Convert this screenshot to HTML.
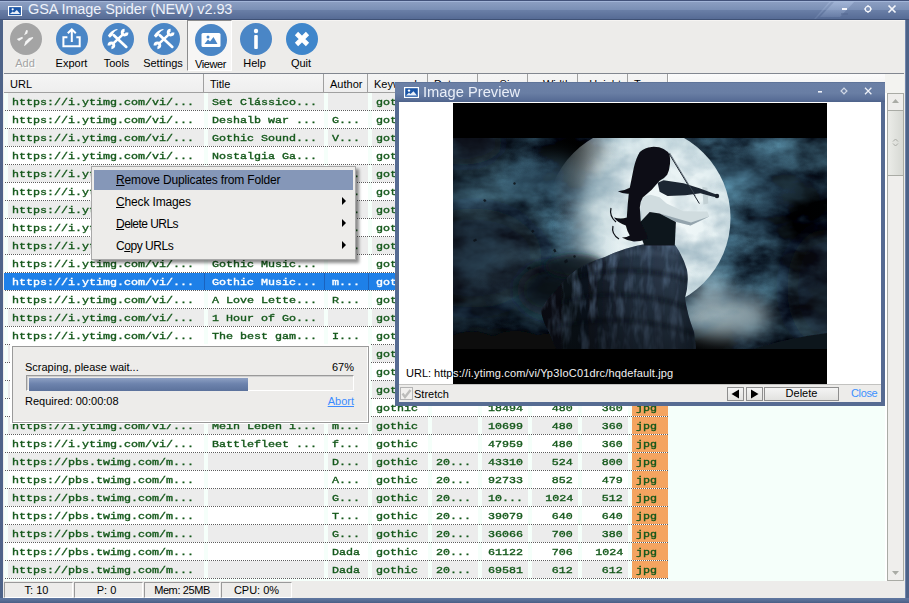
<!DOCTYPE html>
<html lang="en"><head><meta charset="utf-8"><title>GSA Image Spider (NEW) v2.93</title>
<style>
*{box-sizing:border-box;margin:0;padding:0}
html,body{width:909px;height:603px;overflow:hidden}
body{position:relative;background:#4e6388;font-family:"Liberation Sans",sans-serif;font-size:11px;color:#000}
.abs{position:absolute}
#titlebar{left:0;top:0;width:909px;height:20px;background:linear-gradient(#42527a 0,#42527a 1px,#a2b5d8 1px,#a2b5d8 2px,#8b9ec1 2px,#7a8fb5 10px,#6a7fa7 10px,#566b95 19px,#3f5175 19px,#3f5175 20px)}
#title{left:28px;top:0;height:20px;line-height:19px;font-size:14.5px;color:#eef2fa;white-space:nowrap;letter-spacing:-0.1px}
#client{left:3px;top:20px;width:902px;height:578px;background:#edecea;border-top:1px solid #f6f4f2}
#rb{left:905px;top:20px;width:1px;height:578px;background:#7086ad}
#bb{left:0;top:598px;width:909px;height:5px;background:linear-gradient(#6078a0 0,#5a7098 2px,#4a5f85 5px)}
.tbl{position:absolute;top:62px;transform:translateX(-50%);font-size:11px;white-space:nowrap;line-height:12px;top:57px}
.ico{position:absolute;top:23px;width:32px;height:32px}
#lv{left:4px;top:73px;width:900px;height:508px;background:#f5fffa;border-top:1px solid #828790}
#hdr{left:4px;top:74px;width:900px;height:19px;background:linear-gradient(#fbfbfb,#efefef);border-bottom:1px solid #a0a0a0}
.hc{position:absolute;top:74px;height:18px;border-right:1px solid #a0a0a0;box-shadow:1px 0 0 #fff;background:linear-gradient(#f5f5f5,#eeeeee);font-size:11px;line-height:20px;padding-left:6px;white-space:nowrap;overflow:hidden}
.row{position:absolute;left:4px;width:883px;height:18px}
.row .dot{position:absolute;left:0;top:17px;width:664px;height:1px;background:repeating-linear-gradient(90deg,#fff 0,#fff 1px,#5c5c5c 1px,#5c5c5c 2px)}
.c{position:absolute;top:0;height:17px;font-family:"Liberation Mono",monospace;font-weight:normal;-webkit-text-stroke:0.35px #14581a;font-size:9.3px;line-height:20px;color:#14581a;white-space:pre;overflow:hidden}
.c span{display:inline-block;transform:scaleX(1.2545);transform-origin:0 50%}
.r span{transform-origin:100% 50%}
.g .c{background:#ececec}
.w .c{background:#fff}
.row .c.t{background:#f4a460}
.sel{background:linear-gradient(#1e80e8 17px,transparent 17px)}
.vs{position:absolute;top:0;width:1px;height:17px;background:#1a62bd}
.sel .c{background:transparent;color:#fff;-webkit-text-stroke-color:#fff}
.sel .c.t{background:#f4a460;color:#14581a;-webkit-text-stroke-color:#14581a}
.r{text-align:right;padding-right:5px}
.l{padding-left:4px}
#menu{left:91px;top:166px;width:265px;height:94px;background:#edecea;border:1px solid #a8a8a8;box-shadow:3px 3px 3px rgba(0,0,0,.45)}
.mi{position:absolute;left:2px;width:259px;height:20px;line-height:21px;padding-left:22px;font-size:12px;letter-spacing:-0.15px;white-space:nowrap}
.mi u{text-decoration:underline;text-underline-offset:1px}
.mi.hl{background:#8597b8}
.arr{position:absolute;left:250px;width:0;height:0;border-left:4px solid #000;border-top:4px solid transparent;border-bottom:4px solid transparent}
#prog{left:10px;top:344px;width:360px;height:80px;background:#fff}
#progin{left:12px;top:346px;width:357px;height:77px;background:#edecea;border-left:1px solid #9a9a9a;border-top:1px solid #9a9a9a;border-right:1px solid #9a9a9a;border-bottom:1px solid #9a9a9a;box-shadow:inset -1px -1px 0 #fff}
.pt{position:absolute;font-size:11px;line-height:13px;white-space:nowrap}
#pbar{left:26px;top:375px;width:328px;height:16px;background:#edecea;border-top:1px solid #9a9a9a;border-left:1px solid #9a9a9a;border-right:1px solid #fff;border-bottom:1px solid #fff;box-shadow:inset 1px 1px 0 #d0d0d0}
#pfill{left:29px;top:378px;width:219px;height:13px;background:linear-gradient(#8da0c3,#6d83ad 45%,#5c729c)}
.sp{position:absolute;top:582px;height:16px;border-left:1px solid #9a9a9a;border-top:1px solid #9a9a9a;border-right:1px solid #fff;border-bottom:1px solid #fff;font-size:11px;line-height:15px;text-align:center;white-space:nowrap}
#sb{left:887px;top:93px;width:17px;height:488px;background:#efeeec;border:1px solid #a9aba5}
.sbb{position:absolute;left:887px;width:17px;background:#eeedeb;border:1px solid #a9aba5}
#pv{left:395px;top:82px;width:490px;height:324px;background:#566b92}
#pvt{left:395px;top:82px;width:490px;height:20px;background:linear-gradient(#5f7499 0,#5f7499 1px,#6b80a6 1px,#697ea4 11px,#586d96 18px,#4f648c 19px,#4f648c 20px)}
#pvtitle{left:423px;top:82px;height:20px;line-height:20px;font-size:15.4px;color:#e9eef8;white-space:nowrap;transform:scaleX(.955);transform-origin:0 50%}
#pvc{left:399px;top:102px;width:482px;height:300px;background:#fff}
#pvimg{left:453px;top:103px;width:374px;height:281px;background:#000}
#pvbar{left:399px;top:384px;width:482px;height:18px;background:#edecea;border-top:1px solid #c2c2c0}
.btn{position:absolute;top:387px;height:14px;border:1px solid #8e8e8e;background:linear-gradient(#f4f4f4,#e2e2e0);font-size:11px;line-height:11px;text-align:center}
</style></head>
<body>
<div class="abs" id="titlebar"></div>
<svg class="abs" style="left:800px;top:0" width="109" height="20" viewBox="800 0 109 20">
<defs><linearGradient id="hlg" x1="0" x2="0" y1="0" y2="1"><stop offset="0" stop-color="#a6b9da" stop-opacity=".85"/><stop offset="1" stop-color="#8fa3c8" stop-opacity=".25"/></linearGradient></defs><polygon points="830,1 832,1 816,19 814,19" fill="url(#hlg)" opacity=".7"/>
<polygon points="835,1 855,1 840,17 820,17" fill="url(#hlg)"/>
<rect x="842" y="8" width="5" height="2" fill="#f4f6fb"/>
<rect x="841" y="13" width="7" height="2" fill="#53688f" opacity=".5"/>
<circle cx="868" cy="9" r="2.700" fill="none" stroke="#f4f6fb" stroke-width="1.200"/>
<path d="M868 5v1.500M868 11.500v1.500M864 9h1.500M870.500 9h1.500" stroke="#f4f6fb" stroke-width="1.200"/>
<path d="M888.5 5.5l7 7M895.500 5.500l-7 7" stroke="#f4f6fb" stroke-width="1.7"/>
</svg>
<svg class="abs" style="left:8px;top:6px" width="14" height="10.300" viewBox="0 0 15 11" preserveAspectRatio="none"><rect x=".5" y=".5" width="14" height="10" fill="#1c56a6" stroke="#fff" stroke-width="1.4"/><circle cx="5" cy="3.6" r="1.2" fill="#fff"/><path d="M2 8.500 5 5.800 6.500 7 9.500 4.200 13 8.500z" fill="#e8eef8"/></svg>
<div class="abs" id="title">GSA Image Spider (NEW) v2.93</div>
<div class="abs" id="client"></div>
<div class="abs" id="rb"></div>
<div class="abs" id="bb"></div>
<!-- toolbar -->
<div class="abs" style="left:187px;top:20px;width:45px;height:51px;background:#f7f6f5;border-left:1px solid #8c8c8c;border-top:1px solid #8c8c8c;border-right:1px solid #fff;border-bottom:1px solid #fff"></div>
<svg class="ico" style="left:10px" viewBox="0 0 32 32"><circle cx="16" cy="16" r="16" fill="#a4a4a4"/><g fill="#f4f4f4"><path d="M16.200 7 17.900 7.600 17.300 10.600 14.100 12.200z"/><path d="M6.800 15.900 12.300 13.700 13 15.200 9 17.900z"/><path d="M22.900 13.900 23.200 15 15.200 22.600 14 22.900 15.400 18.400 19 15.100z"/></g></svg>
<svg class="ico" style="left:56px" viewBox="0 0 32 32"><circle cx="16" cy="16" r="16" fill="#4a86c6"/><path d="M11.400 14.300H7.400V23.200H23.700V14.300H20.300" fill="none" stroke="#fff" stroke-width="2"/><path d="M15.800 19V6.500M11.800 10.300 15.800 6.300 19.800 10.300" fill="none" stroke="#fff" stroke-width="2"/></svg>
<svg class="ico" style="left:102px" viewBox="0 0 32 32"><circle cx="16" cy="16" r="16" fill="#4a86c6"/><use href="#hw"/></svg>
<svg class="ico" style="left:148px" viewBox="0 0 32 32"><defs><g id="hw"><path d="M11.600 20.200 20.400 11.800" stroke="#fff" stroke-width="2.500"/><path d="M25 9.600A2.400 2.400 0 1 1 22.600 7.200" fill="none" stroke="#fff" stroke-width="2.900"/><path d="M7 22.400A2.400 2.400 0 1 1 9.400 24.800" fill="none" stroke="#fff" stroke-width="2.900"/><path d="M11.800 12.300 24.300 23.900" stroke="#fff" stroke-width="2.700" stroke-linecap="round"/><path d="M15.600 6C11 6.300 8 9.500 5.900 12.700L7.900 14.700 10.600 12.300C11.200 9.500 12.800 7.800 15.300 6.900z" fill="#fff"/></g></defs><circle cx="16" cy="16" r="16" fill="#4a86c6"/><use href="#hw"/></svg>
<svg class="ico" style="left:195px;top:24px" viewBox="0 0 32 32"><circle cx="16" cy="16" r="16" fill="#4a86c6"/><rect x="6.500" y="9" width="19" height="14" rx="1.500" fill="#fff"/><circle cx="13" cy="13" r="1.500" fill="#4a86c6"/><path d="M9.500 20 13 15.500 15 17.500 18.500 13 22.500 20z" fill="#4a86c6"/></svg>
<svg class="ico" style="left:240px" viewBox="0 0 32 32"><circle cx="16" cy="16" r="16" fill="#4a86c6"/><circle cx="16" cy="8" r="2.200" fill="#fff"/><rect x="14.200" y="12" width="3.600" height="14" rx="1" fill="#fff"/></svg>
<svg class="ico" style="left:286px" viewBox="0 0 32 32"><circle cx="16" cy="16" r="16" fill="#3f86cb"/><path d="M10.500 10.500 21.500 21.500M21.500 10.500 10.500 21.500" stroke="#fff" stroke-width="4.600"/></svg>
<div class="tbl" style="left:25px;color:#a4a4a4;text-shadow:1px 1px 0 #fff">Add</div>
<div class="tbl" style="left:71.500px">Export</div>
<div class="tbl" style="left:116.500px">Tools</div>
<div class="tbl" style="left:163px">Settings</div>
<div class="tbl" style="left:210.500px;top:58px;letter-spacing:-0.4px">Viewer</div>
<div class="tbl" style="left:254.500px">Help</div>
<div class="tbl" style="left:301px">Quit</div>
<div class="abs" id="lv"></div>
<div class="abs" id="hdr"></div>
<div class="hc" style="left:4px;width:200px;">URL</div>
<div class="hc" style="left:204px;width:120px;">Title</div>
<div class="hc" style="left:324px;width:44px;">Author</div>
<div class="hc" style="left:368px;width:60px;">Keyword</div>
<div class="hc" style="left:428px;width:50px;">Date</div>
<div class="hc" style="left:478px;width:50px;text-align:right;padding-right:6px;padding-left:0;">Size</div>
<div class="hc" style="left:528px;width:50px;text-align:right;padding-right:6px;padding-left:0;">Width</div>
<div class="hc" style="left:578px;width:50px;text-align:right;padding-right:6px;padding-left:0;">Height</div>
<div class="hc" style="left:628px;width:40px;">Type</div>
<div class="row g" style="top:93px"><div class="c l" style="left:4px;width:196px"><span>https://i.ytimg.com/vi/...</span></div><div class="c l" style="left:204px;width:116px"><span>Set Clássico...</span></div><div class="c l" style="left:324px;width:40px"></div><div class="c l" style="left:368px;width:56px"><span>gothic</span></div><div class="c l" style="left:428px;width:46px"></div><div class="c r" style="left:478px;width:46px"><span>19012</span></div><div class="c r" style="left:528px;width:46px"><span>480</span></div><div class="c r" style="left:578px;width:46px"><span>360</span></div><div class="c l t" style="left:628px;width:36px"><span>jpg</span></div><div class="dot"></div></div>
<div class="row w" style="top:111px"><div class="c l" style="left:4px;width:196px"><span>https://i.ytimg.com/vi/...</span></div><div class="c l" style="left:204px;width:116px"><span>Deshalb war ...</span></div><div class="c l" style="left:324px;width:40px"><span>G...</span></div><div class="c l" style="left:368px;width:56px"><span>gothic</span></div><div class="c l" style="left:428px;width:46px"></div><div class="c r" style="left:478px;width:46px"><span>21544</span></div><div class="c r" style="left:528px;width:46px"><span>480</span></div><div class="c r" style="left:578px;width:46px"><span>360</span></div><div class="c l t" style="left:628px;width:36px"><span>jpg</span></div><div class="dot"></div></div>
<div class="row g" style="top:129px"><div class="c l" style="left:4px;width:196px"><span>https://i.ytimg.com/vi/...</span></div><div class="c l" style="left:204px;width:116px"><span>Gothic Sound...</span></div><div class="c l" style="left:324px;width:40px"><span>V...</span></div><div class="c l" style="left:368px;width:56px"><span>gothic</span></div><div class="c l" style="left:428px;width:46px"></div><div class="c r" style="left:478px;width:46px"><span>17320</span></div><div class="c r" style="left:528px;width:46px"><span>480</span></div><div class="c r" style="left:578px;width:46px"><span>360</span></div><div class="c l t" style="left:628px;width:36px"><span>jpg</span></div><div class="dot"></div></div>
<div class="row w" style="top:147px"><div class="c l" style="left:4px;width:196px"><span>https://i.ytimg.com/vi/...</span></div><div class="c l" style="left:204px;width:116px"><span>Nostalgia Ga...</span></div><div class="c l" style="left:324px;width:40px"></div><div class="c l" style="left:368px;width:56px"><span>gothic</span></div><div class="c l" style="left:428px;width:46px"></div><div class="c r" style="left:478px;width:46px"><span>20417</span></div><div class="c r" style="left:528px;width:46px"><span>480</span></div><div class="c r" style="left:578px;width:46px"><span>360</span></div><div class="c l t" style="left:628px;width:36px"><span>jpg</span></div><div class="dot"></div></div>
<div class="row g" style="top:165px"><div class="c l" style="left:4px;width:196px"><span>https://i.ytimg.com/vi/...</span></div><div class="c l" style="left:204px;width:116px"><span>Dark Gothic ...</span></div><div class="c l" style="left:324px;width:40px"><span>D...</span></div><div class="c l" style="left:368px;width:56px"><span>gothic</span></div><div class="c l" style="left:428px;width:46px"></div><div class="c r" style="left:478px;width:46px"><span>16872</span></div><div class="c r" style="left:528px;width:46px"><span>480</span></div><div class="c r" style="left:578px;width:46px"><span>360</span></div><div class="c l t" style="left:628px;width:36px"><span>jpg</span></div><div class="dot"></div></div>
<div class="row w" style="top:183px"><div class="c l" style="left:4px;width:196px"><span>https://i.ytimg.com/vi/...</span></div><div class="c l" style="left:204px;width:116px"><span>Gothic Rock ...</span></div><div class="c l" style="left:324px;width:40px"><span>K...</span></div><div class="c l" style="left:368px;width:56px"><span>gothic</span></div><div class="c l" style="left:428px;width:46px"></div><div class="c r" style="left:478px;width:46px"><span>23051</span></div><div class="c r" style="left:528px;width:46px"><span>480</span></div><div class="c r" style="left:578px;width:46px"><span>360</span></div><div class="c l t" style="left:628px;width:36px"><span>jpg</span></div><div class="dot"></div></div>
<div class="row g" style="top:201px"><div class="c l" style="left:4px;width:196px"><span>https://i.ytimg.com/vi/...</span></div><div class="c l" style="left:204px;width:116px"><span>Best of Goth...</span></div><div class="c l" style="left:324px;width:40px"><span>L...</span></div><div class="c l" style="left:368px;width:56px"><span>gothic</span></div><div class="c l" style="left:428px;width:46px"></div><div class="c r" style="left:478px;width:46px"><span>18233</span></div><div class="c r" style="left:528px;width:46px"><span>480</span></div><div class="c r" style="left:578px;width:46px"><span>360</span></div><div class="c l t" style="left:628px;width:36px"><span>jpg</span></div><div class="dot"></div></div>
<div class="row w" style="top:219px"><div class="c l" style="left:4px;width:196px"><span>https://i.ytimg.com/vi/...</span></div><div class="c l" style="left:204px;width:116px"><span>Gothic Metal...</span></div><div class="c l" style="left:324px;width:40px"><span>A...</span></div><div class="c l" style="left:368px;width:56px"><span>gothic</span></div><div class="c l" style="left:428px;width:46px"></div><div class="c r" style="left:478px;width:46px"><span>22690</span></div><div class="c r" style="left:528px;width:46px"><span>480</span></div><div class="c r" style="left:578px;width:46px"><span>360</span></div><div class="c l t" style="left:628px;width:36px"><span>jpg</span></div><div class="dot"></div></div>
<div class="row g" style="top:237px"><div class="c l" style="left:4px;width:196px"><span>https://i.ytimg.com/vi/...</span></div><div class="c l" style="left:204px;width:116px"><span>Dark Ambient...</span></div><div class="c l" style="left:324px;width:40px"><span>S...</span></div><div class="c l" style="left:368px;width:56px"><span>gothic</span></div><div class="c l" style="left:428px;width:46px"></div><div class="c r" style="left:478px;width:46px"><span>15478</span></div><div class="c r" style="left:528px;width:46px"><span>480</span></div><div class="c r" style="left:578px;width:46px"><span>360</span></div><div class="c l t" style="left:628px;width:36px"><span>jpg</span></div><div class="dot"></div></div>
<div class="row w" style="top:255px"><div class="c l" style="left:4px;width:196px"><span>https://i.ytimg.com/vi/...</span></div><div class="c l" style="left:204px;width:116px"><span>Gothic Music...</span></div><div class="c l" style="left:324px;width:40px"></div><div class="c l" style="left:368px;width:56px"><span>gothic</span></div><div class="c l" style="left:428px;width:46px"></div><div class="c r" style="left:478px;width:46px"><span>20135</span></div><div class="c r" style="left:528px;width:46px"><span>480</span></div><div class="c r" style="left:578px;width:46px"><span>360</span></div><div class="c l t" style="left:628px;width:36px"><span>jpg</span></div><div class="dot"></div></div>
<div class="row sel" style="top:273px"><div class="c l" style="left:4px;width:196px"><span>https://i.ytimg.com/vi/...</span></div><div class="c l" style="left:204px;width:116px"><span>Gothic Music...</span></div><div class="c l" style="left:324px;width:40px"><span>m...</span></div><div class="c l" style="left:368px;width:56px"><span>gothic</span></div><div class="c l" style="left:428px;width:46px"></div><div class="c r" style="left:478px;width:46px"><span>24716</span></div><div class="c r" style="left:528px;width:46px"><span>480</span></div><div class="c r" style="left:578px;width:46px"><span>360</span></div><div class="c l t" style="left:628px;width:36px"><span>jpg</span></div><div class="vs" style="left:200px"></div><div class="vs" style="left:320px"></div><div class="vs" style="left:364px"></div><div class="vs" style="left:424px"></div><div class="vs" style="left:474px"></div><div class="vs" style="left:524px"></div><div class="vs" style="left:574px"></div><div class="vs" style="left:624px"></div><div class="dot"></div></div>
<div class="row w" style="top:291px"><div class="c l" style="left:4px;width:196px"><span>https://i.ytimg.com/vi/...</span></div><div class="c l" style="left:204px;width:116px"><span>A Love Lette...</span></div><div class="c l" style="left:324px;width:40px"><span>R...</span></div><div class="c l" style="left:368px;width:56px"><span>gothic</span></div><div class="c l" style="left:428px;width:46px"></div><div class="c r" style="left:478px;width:46px"><span>19844</span></div><div class="c r" style="left:528px;width:46px"><span>480</span></div><div class="c r" style="left:578px;width:46px"><span>360</span></div><div class="c l t" style="left:628px;width:36px"><span>jpg</span></div><div class="dot"></div></div>
<div class="row g" style="top:309px"><div class="c l" style="left:4px;width:196px"><span>https://i.ytimg.com/vi/...</span></div><div class="c l" style="left:204px;width:116px"><span>1 Hour of Go...</span></div><div class="c l" style="left:324px;width:40px"></div><div class="c l" style="left:368px;width:56px"><span>gothic</span></div><div class="c l" style="left:428px;width:46px"></div><div class="c r" style="left:478px;width:46px"><span>21307</span></div><div class="c r" style="left:528px;width:46px"><span>480</span></div><div class="c r" style="left:578px;width:46px"><span>360</span></div><div class="c l t" style="left:628px;width:36px"><span>jpg</span></div><div class="dot"></div></div>
<div class="row w" style="top:327px"><div class="c l" style="left:4px;width:196px"><span>https://i.ytimg.com/vi/...</span></div><div class="c l" style="left:204px;width:116px"><span>The best gam...</span></div><div class="c l" style="left:324px;width:40px"><span>I...</span></div><div class="c l" style="left:368px;width:56px"><span>gothic</span></div><div class="c l" style="left:428px;width:46px"></div><div class="c r" style="left:478px;width:46px"><span>17659</span></div><div class="c r" style="left:528px;width:46px"><span>480</span></div><div class="c r" style="left:578px;width:46px"><span>360</span></div><div class="c l t" style="left:628px;width:36px"><span>jpg</span></div><div class="dot"></div></div>
<div class="row g" style="top:345px"><div class="c l" style="left:4px;width:196px"><span>https://i.ytimg.com/vi/...</span></div><div class="c l" style="left:204px;width:116px"><span>Gothic Archi...</span></div><div class="c l" style="left:324px;width:40px"></div><div class="c l" style="left:368px;width:56px"><span>gothic</span></div><div class="c l" style="left:428px;width:46px"></div><div class="c r" style="left:478px;width:46px"><span>16021</span></div><div class="c r" style="left:528px;width:46px"><span>480</span></div><div class="c r" style="left:578px;width:46px"><span>360</span></div><div class="c l t" style="left:628px;width:36px"><span>jpg</span></div><div class="dot"></div></div>
<div class="row w" style="top:363px"><div class="c l" style="left:4px;width:196px"><span>https://i.ytimg.com/vi/...</span></div><div class="c l" style="left:204px;width:116px"><span>Victorian Go...</span></div><div class="c l" style="left:324px;width:40px"><span>K...</span></div><div class="c l" style="left:368px;width:56px"><span>gothic</span></div><div class="c l" style="left:428px;width:46px"></div><div class="c r" style="left:478px;width:46px"><span>22148</span></div><div class="c r" style="left:528px;width:46px"><span>480</span></div><div class="c r" style="left:578px;width:46px"><span>360</span></div><div class="c l t" style="left:628px;width:36px"><span>jpg</span></div><div class="dot"></div></div>
<div class="row g" style="top:381px"><div class="c l" style="left:4px;width:196px"><span>https://i.ytimg.com/vi/...</span></div><div class="c l" style="left:204px;width:116px"><span>Gothic Cathe...</span></div><div class="c l" style="left:324px;width:40px"></div><div class="c l" style="left:368px;width:56px"><span>gothic</span></div><div class="c l" style="left:428px;width:46px"></div><div class="c r" style="left:478px;width:46px"><span>19530</span></div><div class="c r" style="left:528px;width:46px"><span>480</span></div><div class="c r" style="left:578px;width:46px"><span>360</span></div><div class="c l t" style="left:628px;width:36px"><span>jpg</span></div><div class="dot"></div></div>
<div class="row w" style="top:399px"><div class="c l" style="left:4px;width:196px"><span>https://i.ytimg.com/vi/...</span></div><div class="c l" style="left:204px;width:116px"><span>Gothic Style...</span></div><div class="c l" style="left:324px;width:40px"><span>P...</span></div><div class="c l" style="left:368px;width:56px"><span>gothic</span></div><div class="c l" style="left:428px;width:46px"></div><div class="c r" style="left:478px;width:46px"><span>18494</span></div><div class="c r" style="left:528px;width:46px"><span>480</span></div><div class="c r" style="left:578px;width:46px"><span>360</span></div><div class="c l t" style="left:628px;width:36px"><span>jpg</span></div><div class="dot"></div></div>
<div class="row g" style="top:417px"><div class="c l" style="left:4px;width:196px"><span>https://i.ytimg.com/vi/...</span></div><div class="c l" style="left:204px;width:116px"><span>Mein Leben i...</span></div><div class="c l" style="left:324px;width:40px"><span>m...</span></div><div class="c l" style="left:368px;width:56px"><span>gothic</span></div><div class="c l" style="left:428px;width:46px"></div><div class="c r" style="left:478px;width:46px"><span>10699</span></div><div class="c r" style="left:528px;width:46px"><span>480</span></div><div class="c r" style="left:578px;width:46px"><span>360</span></div><div class="c l t" style="left:628px;width:36px"><span>jpg</span></div><div class="dot"></div></div>
<div class="row w" style="top:435px"><div class="c l" style="left:4px;width:196px"><span>https://i.ytimg.com/vi/...</span></div><div class="c l" style="left:204px;width:116px"><span>Battlefleet ...</span></div><div class="c l" style="left:324px;width:40px"><span>f...</span></div><div class="c l" style="left:368px;width:56px"><span>gothic</span></div><div class="c l" style="left:428px;width:46px"></div><div class="c r" style="left:478px;width:46px"><span>47959</span></div><div class="c r" style="left:528px;width:46px"><span>480</span></div><div class="c r" style="left:578px;width:46px"><span>360</span></div><div class="c l t" style="left:628px;width:36px"><span>jpg</span></div><div class="dot"></div></div>
<div class="row g" style="top:453px"><div class="c l" style="left:4px;width:196px"><span>https://pbs.twimg.com/m...</span></div><div class="c l" style="left:204px;width:116px"></div><div class="c l" style="left:324px;width:40px"><span>D...</span></div><div class="c l" style="left:368px;width:56px"><span>gothic</span></div><div class="c l" style="left:428px;width:46px"><span>20...</span></div><div class="c r" style="left:478px;width:46px"><span>43310</span></div><div class="c r" style="left:528px;width:46px"><span>524</span></div><div class="c r" style="left:578px;width:46px"><span>800</span></div><div class="c l t" style="left:628px;width:36px"><span>jpg</span></div><div class="dot"></div></div>
<div class="row w" style="top:471px"><div class="c l" style="left:4px;width:196px"><span>https://pbs.twimg.com/m...</span></div><div class="c l" style="left:204px;width:116px"></div><div class="c l" style="left:324px;width:40px"><span>A...</span></div><div class="c l" style="left:368px;width:56px"><span>gothic</span></div><div class="c l" style="left:428px;width:46px"><span>20...</span></div><div class="c r" style="left:478px;width:46px"><span>92733</span></div><div class="c r" style="left:528px;width:46px"><span>852</span></div><div class="c r" style="left:578px;width:46px"><span>479</span></div><div class="c l t" style="left:628px;width:36px"><span>jpg</span></div><div class="dot"></div></div>
<div class="row g" style="top:489px"><div class="c l" style="left:4px;width:196px"><span>https://pbs.twimg.com/m...</span></div><div class="c l" style="left:204px;width:116px"></div><div class="c l" style="left:324px;width:40px"><span>G...</span></div><div class="c l" style="left:368px;width:56px"><span>gothic</span></div><div class="c l" style="left:428px;width:46px"><span>20...</span></div><div class="c r" style="left:478px;width:46px"><span>10...</span></div><div class="c r" style="left:528px;width:46px"><span>1024</span></div><div class="c r" style="left:578px;width:46px"><span>512</span></div><div class="c l t" style="left:628px;width:36px"><span>jpg</span></div><div class="dot"></div></div>
<div class="row w" style="top:507px"><div class="c l" style="left:4px;width:196px"><span>https://pbs.twimg.com/m...</span></div><div class="c l" style="left:204px;width:116px"></div><div class="c l" style="left:324px;width:40px"><span>T...</span></div><div class="c l" style="left:368px;width:56px"><span>gothic</span></div><div class="c l" style="left:428px;width:46px"><span>20...</span></div><div class="c r" style="left:478px;width:46px"><span>39079</span></div><div class="c r" style="left:528px;width:46px"><span>640</span></div><div class="c r" style="left:578px;width:46px"><span>640</span></div><div class="c l t" style="left:628px;width:36px"><span>jpg</span></div><div class="dot"></div></div>
<div class="row g" style="top:525px"><div class="c l" style="left:4px;width:196px"><span>https://pbs.twimg.com/m...</span></div><div class="c l" style="left:204px;width:116px"></div><div class="c l" style="left:324px;width:40px"><span>G...</span></div><div class="c l" style="left:368px;width:56px"><span>gothic</span></div><div class="c l" style="left:428px;width:46px"><span>20...</span></div><div class="c r" style="left:478px;width:46px"><span>36066</span></div><div class="c r" style="left:528px;width:46px"><span>700</span></div><div class="c r" style="left:578px;width:46px"><span>380</span></div><div class="c l t" style="left:628px;width:36px"><span>jpg</span></div><div class="dot"></div></div>
<div class="row w" style="top:543px"><div class="c l" style="left:4px;width:196px"><span>https://pbs.twimg.com/m...</span></div><div class="c l" style="left:204px;width:116px"></div><div class="c l" style="left:324px;width:40px"><span>Dada</span></div><div class="c l" style="left:368px;width:56px"><span>gothic</span></div><div class="c l" style="left:428px;width:46px"><span>20...</span></div><div class="c r" style="left:478px;width:46px"><span>61122</span></div><div class="c r" style="left:528px;width:46px"><span>706</span></div><div class="c r" style="left:578px;width:46px"><span>1024</span></div><div class="c l t" style="left:628px;width:36px"><span>jpg</span></div><div class="dot"></div></div>
<div class="row g" style="top:561px"><div class="c l" style="left:4px;width:196px"><span>https://pbs.twimg.com/m...</span></div><div class="c l" style="left:204px;width:116px"></div><div class="c l" style="left:324px;width:40px"><span>Dada</span></div><div class="c l" style="left:368px;width:56px"><span>gothic</span></div><div class="c l" style="left:428px;width:46px"><span>20...</span></div><div class="c r" style="left:478px;width:46px"><span>69581</span></div><div class="c r" style="left:528px;width:46px"><span>612</span></div><div class="c r" style="left:578px;width:46px"><span>612</span></div><div class="c l t" style="left:628px;width:36px"><span>jpg</span></div><div class="dot"></div></div>
<!-- scrollbar -->
<div class="abs" style="left:885px;top:74px;width:19px;height:19px;background:#f3f3f0"></div>
<div class="abs" style="left:885px;top:93px;width:2px;height:488px;background:#fff"></div>
<div class="abs" id="sb"></div>
<div class="sbb" style="top:93px;height:18px"></div>
<div class="sbb" style="top:110px;height:66px;background:linear-gradient(90deg,#ebece8,#d6d8d3)"></div>
<svg class="abs" style="left:888px;top:94px" width="16" height="487" viewBox="0 0 16 487"><path d="M4 9 7.500 5 11 9z" fill="#a9aba5"/><path d="M5 47.500 7.500 45 10 47.500M5 49.500 7.500 52 10 49.500" fill="none" stroke="#a9aba5" stroke-width="1"/><path d="M4 477 7.500 481 11 477z" fill="#a9aba5"/></svg>
<!-- status bar -->
<div class="sp" style="left:4px;width:69px;padding-right:4px">T: 10</div>
<div class="sp" style="left:74px;width:69px;padding-right:4px">P: 0</div>
<div class="sp" style="left:144px;width:76px;letter-spacing:-0.4px">Mem: 25MB</div>
<div class="sp" style="left:221px;width:71px">CPU: 0%</div>
<!-- context menu -->
<div class="abs" id="menu">
<div class="mi hl" style="top:3px"><u>R</u>emove Duplicates from Folder</div>
<div class="mi" style="top:25px"><u>C</u>heck Images</div><div class="arr" style="top:29.500px"></div>
<div class="mi" style="top:47px;letter-spacing:-0.55px"><u>D</u>elete URLs</div><div class="arr" style="top:51.500px"></div>
<div class="mi" style="top:69px;letter-spacing:-0.45px">C<u>o</u>py URLs</div><div class="arr" style="top:73.500px"></div>
</div>
<!-- progress panel -->
<div class="abs" id="prog"></div>
<div class="abs" id="progin"></div>
<div class="pt" style="left:25px;top:361px">Scraping, please wait...</div>
<div class="pt" style="right:555px;top:361px">67%</div>
<div class="abs" id="pbar"></div>
<div class="abs" id="pfill"></div>
<div class="pt" style="left:25px;top:395px">Required: 00:00:08</div>
<div class="pt" style="right:555px;top:395px;color:#3c8cff;text-decoration:underline">Abort</div>
<!-- image preview window -->
<div class="abs" id="pv"></div>
<div class="abs" id="pvt"></div>
<svg class="abs" style="left:404px;top:87px" width="15" height="11" viewBox="0 0 15 11"><rect x=".5" y=".5" width="14" height="10" fill="#1c56a6" stroke="#fff" stroke-width="1.4"/><circle cx="5" cy="3.6" r="1.2" fill="#fff"/><path d="M2 8.500 5 5.800 6.500 7 9.500 4.200 13 8.500z" fill="#e8eef8"/></svg>
<div class="abs" id="pvtitle">Image Preview</div>
<svg class="abs" style="left:810px;top:82px" width="75" height="20" viewBox="810 0 75 20">
<rect x="818" y="9" width="4" height="1.600" fill="#eef1f8"/>
<circle cx="844" cy="9" r="2.300" fill="none" stroke="#eef1f8" stroke-width="1"/>
<path d="M844 5.500v1.200M844 11.300v1.200M840.500 9h1.200M846.300 9h1.200" stroke="#eef1f8" stroke-width="1"/>
<path d="M865 5.800l6.400 6.400M871.400 5.800l-6.400 6.400" stroke="#eef1f8" stroke-width="1.250"/>
</svg>
<div class="abs" id="pvc"></div>
<div class="abs" id="pvimg"></div>
<svg class="abs" style="left:453px;top:138px" width="374" height="211" viewBox="0 0 374 211">
<defs>
<filter id="cl" x="0" y="0" width="100%" height="100%" color-interpolation-filters="sRGB"><feTurbulence type="fractalNoise" baseFrequency="0.013 0.022" numOctaves="5" seed="23"/><feColorMatrix type="matrix" values="0.940 0 0 0 -0.352  1.450 0 0 0 -0.521  1.600 0 0 0 -0.533  0 0 0 0 1"/></filter>
<filter id="cw" x="0" y="0" width="100%" height="100%" color-interpolation-filters="sRGB"><feTurbulence type="fractalNoise" baseFrequency="0.02 0.03" numOctaves="4" seed="3"/><feColorMatrix type="matrix" values="0 0 0 0 0.25  0 0 0 0 0.42  0 0 0 0 0.52  0 3 0 0 -1.3"/></filter>
<filter id="mt" x="0" y="0" width="100%" height="100%" color-interpolation-filters="sRGB"><feTurbulence type="fractalNoise" baseFrequency="0.05" numOctaves="3" seed="5"/><feColorMatrix type="matrix" values="0 0 0 0 0.55  0 0 0 0 0.66  0 0 0 0 0.71  0 1.800 0 0 -0.75"/></filter>
<filter id="rf" x="0" y="0" width="100%" height="100%" color-interpolation-filters="sRGB"><feTurbulence type="fractalNoise" baseFrequency="0.11 0.035" numOctaves="3" seed="9"/><feColorMatrix type="matrix" values="0 0 0 0 0.38  0 0 0 0 0.48  0 0 0 0 0.60  3 0 0 0 -1.3"/></filter>
<filter id="b2" x="-100%" y="-100%" width="300%" height="300%"><feGaussianBlur stdDeviation="2"/></filter>
<filter id="b3" x="-100%" y="-100%" width="300%" height="300%"><feGaussianBlur stdDeviation="3.500"/></filter>
<filter id="b8" x="-100%" y="-100%" width="300%" height="300%"><feGaussianBlur stdDeviation="9"/></filter>
<filter id="b15" x="-100%" y="-100%" width="300%" height="300%"><feGaussianBlur stdDeviation="16"/></filter>
<filter id="b1"><feGaussianBlur stdDeviation="0.600"/></filter>
<radialGradient id="lit" cx="215" cy="70" r="280" gradientUnits="userSpaceOnUse"><stop offset="0" stop-color="#05090e" stop-opacity="0"/><stop offset=".42" stop-color="#05090e" stop-opacity=".05"/><stop offset=".62" stop-color="#05090e" stop-opacity=".3"/><stop offset="1" stop-color="#05090e" stop-opacity=".65"/></radialGradient>
<radialGradient id="moon" cx="205" cy="85" r="95" gradientUnits="userSpaceOnUse"><stop offset="0" stop-color="#f6fbfb"/><stop offset=".7" stop-color="#e6f1f3"/><stop offset="1" stop-color="#d0e2e7"/></radialGradient>
<linearGradient id="mfade" x1="100" x2="172" y1="0" y2="0" gradientUnits="userSpaceOnUse"><stop offset="0" stop-color="#000"/><stop offset="1" stop-color="#fff"/></linearGradient>
<mask id="mm" maskUnits="userSpaceOnUse" x="0" y="0" width="374" height="211"><rect width="374" height="211" fill="url(#mfade)"/></mask>
<linearGradient id="dr" x1="0" x2="1" y1="0" y2="0"><stop offset="0" stop-color="#080c12"/><stop offset=".3" stop-color="#111822"/><stop offset=".6" stop-color="#2b3a4d"/><stop offset=".85" stop-color="#34465b"/><stop offset="1" stop-color="#202d3d"/></linearGradient>
<linearGradient id="drv" x1="0" x2="0" y1="0" y2="1"><stop offset="0" stop-color="#000" stop-opacity="0"/><stop offset=".6" stop-color="#04070b" stop-opacity=".15"/><stop offset="1" stop-color="#04070b" stop-opacity=".6"/></linearGradient>
<clipPath id="pc"><rect width="374" height="211"/></clipPath>
<clipPath id="mc"><circle cx="185.500" cy="80" r="92"/></clipPath>
<clipPath id="dc"><path id="dress" d="M192 106Q170 110 152 119Q136 124 123 132Q112 140 103 152Q92 162 88 173Q90 184 96 194L103 211H243L241 194Q234 176 232 160Q236 146 234 132Q230 118 222 107z"/></clipPath>
</defs>
<g clip-path="url(#pc)">
<rect width="374" height="211" filter="url(#cl)"/>
<ellipse cx="192" cy="78" rx="62" ry="82" fill="#b4cdd4" opacity=".95" filter="url(#b8)"/>
<ellipse cx="150" cy="92" rx="24" ry="22" fill="#a9c4cc" opacity=".5" filter="url(#b8)"/>
<ellipse cx="272" cy="178" rx="46" ry="22" fill="#a3bac2" opacity=".95" filter="url(#b8)"/>
<ellipse cx="95" cy="38" rx="34" ry="20" fill="#4d7e98" opacity=".45" filter="url(#b8)"/>
<ellipse cx="310" cy="40" rx="40" ry="30" fill="#4d7e98" opacity=".25" filter="url(#b8)"/>
<ellipse cx="75" cy="172" rx="40" ry="8" fill="#3c6a80" opacity=".45" filter="url(#b8)"/>
<rect width="374" height="211" fill="url(#lit)"/>
<ellipse cx="20" cy="120" rx="70" ry="50" fill="#070d13" opacity=".6" filter="url(#b15)"/>
<ellipse cx="10" cy="5" rx="40" ry="22" fill="#070c12" opacity=".7" filter="url(#b8)"/>
<ellipse cx="374" cy="150" rx="40" ry="60" fill="#0a1118" opacity=".6" filter="url(#b15)"/>
<g mask="url(#mm)"><circle cx="185.500" cy="80" r="92" fill="url(#moon)"/>
<g clip-path="url(#mc)"><rect width="374" height="211" filter="url(#mt)" opacity=".4"/></g></g>
<rect width="374" height="211" filter="url(#cw)" opacity=".3"/>
<ellipse cx="258" cy="150" rx="16" ry="16" fill="#c9dce1" opacity=".45" filter="url(#b8)"/>
<ellipse cx="100" cy="152" rx="36" ry="26" fill="#0e151d" opacity=".8" filter="url(#b8)"/><ellipse cx="122" cy="128" rx="30" ry="12" fill="#0e151d" opacity=".8" filter="url(#b3)"/>
<path d="M0 211V197Q20 189 40 198Q60 188 85 197Q100 192 120 201V211z" fill="#070b10" filter="url(#b1)"/>
<path d="M300 211Q335 200 374 195V211z" fill="#10171f" filter="url(#b1)"/>
<g fill="#0a0f15" opacity=".8"><path d="M30 62l2-1 1.500 2-2 1zM60 45l2-1 1 2-2 1zM20 102l3-1.500 1 2-3 1.500zM78 93l2-1.500 1.500 2-2 1.500zM74 130l3-1.500 1 2-3 1.500zM100 112l2-1.500 1.500 3-2 1zM111 123l3-2 1 3-3 1.500zM92 140l2-1.500 2 2-3 1.500zM120 118l2-1 1 2-2 1z"/></g>
<!-- dress -->
<use href="#dress" fill="url(#dr)" filter="url(#b1)"/>
<g clip-path="url(#dc)"><rect width="374" height="211" filter="url(#rf)" opacity=".75"/>
<path d="M150 121Q185 108 226 120" stroke="#5a7088" stroke-width="3" fill="none" opacity=".55" filter="url(#b2)"/>
<path d="M120 140Q175 124 236 142M105 165Q170 146 236 170M96 190Q170 172 242 196" stroke="#05080c" stroke-width="4" fill="none" opacity=".55" filter="url(#b2)"/>
<rect width="374" height="211" fill="url(#drv)"/></g>
<!-- skin -->
<path d="M186.800 59.600 197.700 56.700 206.600 59.200 213.600 65.600 230.500 73.200 254.400 73.600 256.300 78.500 237.500 87.500 223.500 83.900 206.600 75.500 193.700 80.500 189.700 83.500z" fill="#d0dcdf" filter="url(#b1)"/>
<path d="M249.400 48.700 254.400 49.700 255.300 65.600 250.400 66.600z" fill="#c2d0d4" filter="url(#b1)"/>
<path d="M206.600 75.500 223.500 83.900 237.500 87.500 256.300 78.500 238 84.500 224 80.500z" fill="#8496a0" opacity=".8"/>
<!-- bodice -->
<path d="M187.800 83.500 196.700 74 206.600 75.500 222.900 83.900 221.800 107.400 191.300 107.400 186.800 95.400z" fill="#10161f" filter="url(#b1)"/>
<!-- violin -->
<path d="M204.700 44.700 210.600 42.300 230.500 45.300 246.400 50.300 261.300 55.700 264.300 56.700 263.900 59.200 260.300 58.800 247.400 55.300 232.500 57.300 214.600 58.100 206.600 53.700z" fill="#1d2631" filter="url(#b1)"/>
<circle cx="264" cy="58" r="2.200" fill="#161d27"/>
<!-- hair -->
<path d="M198.700 8.900Q206 8.500 210.600 10.900Q215 13 216.600 16.900Q217.500 21 217 25.800Q216.500 32 214.200 36.800Q211 41 206.600 42.700L198.700 51.700 189.700 59.600Q187 64 186.800 69.600L187.800 83.500Q190 90 193.700 95.400L194.700 100.400Q188 103.500 180.800 103.400Q174 102.500 168.900 99.400Q174 99.500 176.800 97.400Q174 93 172.800 87.500Q165 85 160.900 79.500Q168 81.500 173.800 79.500L174.800 65.600 175.800 55.700Q169 56 164.900 53.300Q172 52.500 176.800 49.700L180.800 29.800Q183 20 186.800 13.900Q192 9.500 198.700 8.900z" fill="#0b0e14" filter="url(#b1)"/>
<path d="M160 88Q158 96 166 101M158 70Q156 78 163 84" stroke="#0b0e14" stroke-width="1.200" fill="none"/>
<path d="M215.600 14.900 246.400 65.600" stroke="#1c242e" stroke-width="1"/>
<path d="M216.600 14.900 242.400 57.700" stroke="#46525e" stroke-width=".7"/>
</g>
</svg>

<div class="abs" style="left:406px;top:367px;font-size:11px;line-height:13px;white-space:nowrap;color:#000">URL: http</div>
<div class="abs" style="left:453px;top:367px;font-size:11px;line-height:13px;white-space:nowrap;color:#f0f0f0;letter-spacing:.15px">s://i.ytimg.com/vi/Yp3IoC01drc/hqdefault.jpg</div>
<div class="abs" id="pvbar"></div>
<div class="abs" style="left:400px;top:387px;width:13px;height:13px;background:#f1f0ee;border:1px solid #b4b4b4"></div>
<svg class="abs" style="left:400px;top:387px" width="13" height="13" viewBox="0 0 13 13"><path d="M2.500 6.500 5 10 10.500 3" fill="none" stroke="#bdbdbb" stroke-width="2.400"/></svg>
<div class="abs" style="left:414px;top:388px;font-size:11px;line-height:13px">Stretch</div>
<div class="btn" style="left:727px;width:17px"></div>
<div class="btn" style="left:746px;width:17px"></div>
<svg class="abs" style="left:727px;top:387px" width="36" height="14" viewBox="0 0 36 14"><path d="M12 2.500v9L4.500 7z" fill="#000"/><path d="M24 2.500v9L31.500 7z" fill="#000"/></svg>
<div class="btn" style="left:764px;width:75px">Delete</div>
<div class="abs" style="left:851px;top:387px;font-size:11px;line-height:13px;color:#3c90ff;letter-spacing:-0.35px">Close</div>
</body></html>
